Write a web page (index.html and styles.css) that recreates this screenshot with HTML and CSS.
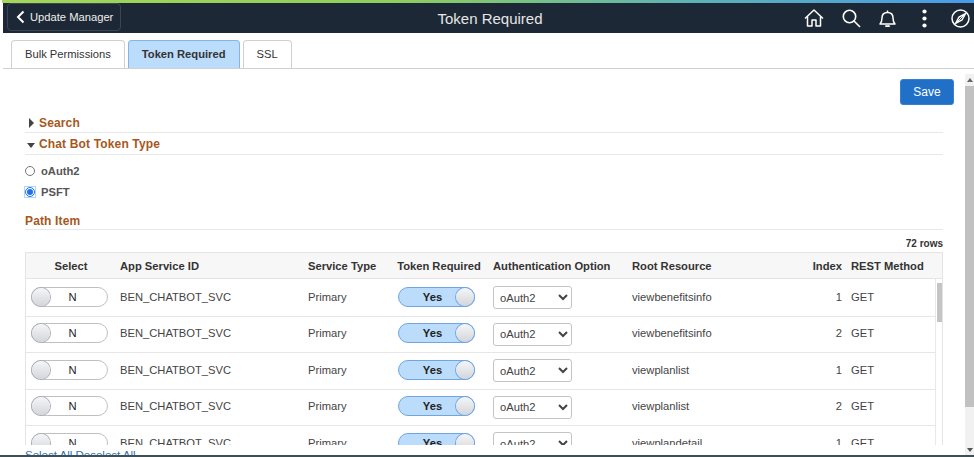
FILE: index.html
```html
<!DOCTYPE html>
<html lang="en">
<head>
    <meta charset="UTF-8">
    <meta name="viewport" content="width=device-width, initial-scale=1.0">
    <title>Token Required</title>
    <link rel="stylesheet" href="styles.css">
</head>
<body>
    <div class="gradient"></div>
    <header class="banner">
        <div class="banner-left">
            <button class="back">
                <svg width="9" height="14" viewBox="0 0 9 14"><path d="M7.5 1.5 2 7l5.500 5.500" fill="none" stroke="#fff" stroke-width="2"/></svg>
                Update Manager
            </button>
        </div>
        <div class="banner-title">Token Required</div>
        <div class="banner-icons">
            <svg width="20" height="18" viewBox="0 0 20 18" fill="none" stroke="#fff" stroke-width="1.500" stroke-linejoin="round">
                <path d="M1 9.500 10 1l9 8.500"/>
                <path d="M3.500 7.500V17h4.500v-6h4v6h4.500V7.500"/>
            </svg>
            <svg width="19" height="19" viewBox="0 0 19 19" fill="none" stroke="#fff" stroke-width="1.600">
                <circle cx="7.500" cy="7.500" r="6.200"/>
                <path d="m12 12 6 6"/>
            </svg>
            <svg width="17" height="18" viewBox="0 0 17 18" fill="none" stroke="#fff" stroke-width="1.500" stroke-linejoin="round">
                <path d="M1 15c1.500-1.500 2-3 2-6 0-3.500 2-5.500 5.500-5.500S14 5.500 14 9c0 3 .5 4.500 2 6z"/>
                <path d="M8.500 3.500V1.500"/>
                <path d="M6.500 16.500c.5 1 3.500 1 4 0" stroke-width="1.800"/>
            </svg>
            <svg class="dots" width="5" height="19" viewBox="0 0 5 19" fill="#fff">
                <circle cx="2.500" cy="2.500" r="2.100"/>
                <circle cx="2.500" cy="9.500" r="2.100"/>
                <circle cx="2.500" cy="16.500" r="2.100"/>
            </svg>
            <svg width="19" height="19" viewBox="0 0 19 19" fill="none" stroke="#fff" stroke-width="1.500">
                <circle cx="9.500" cy="9.500" r="8.500"/>
                <path d="m4.500 14.500 3.500-6.500 6.500-3.500-3.500 6.500z"/>
                <path d="m4.500 14.500 10-10" stroke-width="1"/>
            </svg>
        </div>
    </header>

    <nav class="tabs">
        <div class="tab">Bulk Permissions</div>
        <div class="tab active">Token Required</div>
        <div class="tab">SSL</div>
    </nav>

    <div class="main">
        <div class="content">
            <div class="actions"><button class="save">Save</button></div>

            <h2 class="section first"><span class="arrow-right"></span>Search</h2>
            <h2 class="section second"><span class="arrow-down"></span>Chat Bot Token Type</h2>

            <label class="radio-row"><input type="radio" name="tokentype"> oAuth2</label>
            <label class="radio-row"><input type="radio" name="tokentype" checked> PSFT</label>

            <h2 class="section path-item">Path Item</h2>
            <div class="row-count">72 rows</div>

            <div class="grid">
                <div class="grid-head">
                    <div class="center">Select</div>
                    <div>App Service ID</div>
                    <div>Service Type</div>
                    <div class="center">Token Required</div>
                    <div>Authentication Option</div>
                    <div>Root Resource</div>
                    <div class="right">Index</div>
                    <div>REST Method</div>
                </div>
                <div class="grid-scroll">
                    <div class="grid-rows">
                        <div class="grid-row">
                            <div class="cell"><div class="toggle-off"><span class="knob"></span><span class="toggle-text">N</span></div></div>
                            <div class="cell">BEN_CHATBOT_SVC</div>
                            <div class="cell">Primary</div>
                            <div class="cell"><div class="toggle-on"><span class="toggle-text">Yes</span><span class="knob"></span></div></div>
                            <div class="cell"><select><option>oAuth2</option></select></div>
                            <div class="cell">viewbenefitsinfo</div>
                            <div class="cell right">1</div>
                            <div class="cell">GET</div>
                        </div>
                        <div class="grid-row">
                            <div class="cell"><div class="toggle-off"><span class="knob"></span><span class="toggle-text">N</span></div></div>
                            <div class="cell">BEN_CHATBOT_SVC</div>
                            <div class="cell">Primary</div>
                            <div class="cell"><div class="toggle-on"><span class="toggle-text">Yes</span><span class="knob"></span></div></div>
                            <div class="cell"><select><option>oAuth2</option></select></div>
                            <div class="cell">viewbenefitsinfo</div>
                            <div class="cell right">2</div>
                            <div class="cell">GET</div>
                        </div>
                        <div class="grid-row">
                            <div class="cell"><div class="toggle-off"><span class="knob"></span><span class="toggle-text">N</span></div></div>
                            <div class="cell">BEN_CHATBOT_SVC</div>
                            <div class="cell">Primary</div>
                            <div class="cell"><div class="toggle-on"><span class="toggle-text">Yes</span><span class="knob"></span></div></div>
                            <div class="cell"><select><option>oAuth2</option></select></div>
                            <div class="cell">viewplanlist</div>
                            <div class="cell right">1</div>
                            <div class="cell">GET</div>
                        </div>
                        <div class="grid-row">
                            <div class="cell"><div class="toggle-off"><span class="knob"></span><span class="toggle-text">N</span></div></div>
                            <div class="cell">BEN_CHATBOT_SVC</div>
                            <div class="cell">Primary</div>
                            <div class="cell"><div class="toggle-on"><span class="toggle-text">Yes</span><span class="knob"></span></div></div>
                            <div class="cell"><select><option>oAuth2</option></select></div>
                            <div class="cell">viewplanlist</div>
                            <div class="cell right">2</div>
                            <div class="cell">GET</div>
                        </div>
                        <div class="grid-row">
                            <div class="cell"><div class="toggle-off"><span class="knob"></span><span class="toggle-text">N</span></div></div>
                            <div class="cell">BEN_CHATBOT_SVC</div>
                            <div class="cell">Primary</div>
                            <div class="cell"><div class="toggle-on"><span class="toggle-text">Yes</span><span class="knob"></span></div></div>
                            <div class="cell"><select><option>oAuth2</option></select></div>
                            <div class="cell">viewplandetail</div>
                            <div class="cell right">1</div>
                            <div class="cell">GET</div>
                        </div>
                    </div>
                    <div class="inner-scroll"><div class="inner-thumb"></div></div>
                </div>
            </div>
            <div class="grid-links"><a href="#">Select All</a> <a href="#">Deselect All</a></div>
        </div>
        <div class="page-scroll">
            <span class="scroll-up"></span>
            <div class="page-thumb"></div>
            <span class="scroll-down"></span>
        </div>
    </div>
    <div class="bottom-line"></div>
</body>
</html>
```

FILE: styles.css
```css
html, body {
    height: 100%;
}
body {
    font-family: "Liberation Sans", Arial, sans-serif;
    font-size: 11.2px;
    color: #333333;
    background-color: #ffffff;
    margin: 0;
    padding: 0;
    display: flex;
    flex-direction: column;
    overflow: hidden;
}
.gradient {
    height: 3px;
    flex: none;
    margin-left: 2px;
    background: linear-gradient(to right, #a4d65a 0%, #8fce5c 40%, #5fb3b3 70%, #4a9be8 100%);
}
.banner {
    height: 30px;
    flex: none;
    margin-left: 3px;
    background-color: #1c2835;
    display: grid;
    grid-template-columns: 1fr auto 1fr;
    align-items: center;
}
.banner-left {
    padding-left: 4px;
    align-self: start;
}
.back {
    display: flex;
    align-items: center;
    gap: 5px;
    width: 114px;
    height: 28px;
    padding: 0 0 0 8px;
    background: transparent;
    color: #eeeeee;
    border: 1px solid #3b4654;
    border-radius: 4px;
    font-family: inherit;
    font-size: 11.2px;
    white-space: nowrap;
}
.banner-title {
    color: #e6e6e6;
    font-size: 15px;
    margin-left: 3px;
}
.banner-icons {
    display: flex;
    justify-content: flex-end;
    align-items: center;
    gap: 18px;
    padding-right: 4px;
}
.banner-icons .dots {
    margin: 0 6px 0 8px;
}
.tabs {
    flex: none;
    display: flex;
    gap: 3px;
    height: 28px;
    margin: 7px 0 0 3px;
    padding-left: 8px;
    border-bottom: 1px solid #d0d3d6;
}
.tab {
    display: flex;
    align-items: center;
    padding: 0 13px 1px;
    background: #ffffff;
    border: 1px solid #d0d0d0;
    border-bottom: none;
    border-radius: 4px 4px 0 0;
    color: #333333;
}
.tab.active {
    background-color: #bcdcfb;
    border-color: #86b5e3;
    font-weight: bold;
}
.main {
    flex: 1;
    min-height: 0;
    display: flex;
    overflow: hidden;
}
.content {
    flex: 1;
    min-width: 0;
    padding: 10px 22px 0 25px;
}
.actions {
    display: flex;
    justify-content: flex-end;
    margin-right: -11px;
}
.save {
    width: 54px;
    height: 26px;
    background-color: #2170c8;
    color: #ffffff;
    border: 1px solid #3a80d0;
    border-radius: 3px;
    font-family: inherit;
    font-size: 12px;
}
.section {
    margin: 0;
    height: 21px;
    display: flex;
    align-items: center;
    font-size: 12px;
    font-weight: bold;
    letter-spacing: 0.15px;
    color: #a8571c;
    border-bottom: 1px solid #e6e8ea;
    padding-top: 1px;
    box-sizing: border-box;
}
.section.first {
    margin-top: 7px;
}
.section.second {
    height: 22px;
}
.arrow-right {
    width: 0;
    height: 0;
    margin: 0 5px 0 4px;
    border-left: 5px solid #444444;
    border-top: 5px solid transparent;
    border-bottom: 5px solid transparent;
}
.arrow-down {
    width: 0;
    height: 0;
    margin: 2px 4px 0 2px;
    border-top: 5px solid #444444;
    border-left: 4.500px solid transparent;
    border-right: 4.500px solid transparent;
}
.radio-row {
    display: flex;
    align-items: center;
    gap: 6px;
    height: 21px;
    font-weight: bold;
    color: #555555;
}
.radio-row:first-of-type {
    margin-top: 5px;
}
.radio-row input {
    margin: 0;
    width: 10px;
    height: 10px;
    border-radius: 50%;
    accent-color: #1a73e8;
}
.radio-row input:checked {
    box-shadow: 0 0 0 1px #b5d5f8;
}
.section.path-item {
    margin-top: 8px;
    height: 20px;
    padding-top: 2px;
}
.row-count {
    margin-top: 8px;
    height: 14px;
    text-align: right;
    font-size: 10px;
    font-weight: bold;
}
.grid {
    height: 193px;
    border: 1px solid #e4e4e4;
    border-bottom: none;
    overflow: hidden;
    width: 918px;
    box-sizing: border-box;
}
.grid-head, .grid-row {
    display: grid;
    grid-template-columns: 86px 188px 89px 96px 139px 166px 56px auto;
    align-items: center;
}
.grid-head {
    height: 25px;
    background-color: #f7f7f7;
    border-bottom: 1px solid #e4e4e4;
    font-weight: bold;
}
.grid-head > div, .cell {
    padding-left: 8px;
}
.grid-head .center {
    padding: 0 0 0 4px;
    text-align: center;
}
.grid-head .right, .cell.right {
    padding: 0 4px 0 0;
    text-align: right;
}
.grid-head > div:last-child, .grid-row .cell:last-child {
    padding-left: 5px;
}
.grid-scroll {
    display: flex;
    height: 166px;
}
.grid-rows {
    flex: 1;
    min-width: 0;
    padding-top: 1px;
}
.grid-row {
    height: 33.500px;
    padding-bottom: 2px;
    border-bottom: 1px solid #e6e6e6;
}
.cell {
    color: #444444;
}
.inner-scroll {
    flex: none;
    width: 7px;
    box-sizing: border-box;
    border-left: 1px solid #e8e8e8;
    padding: 4px 0 0 1px;
}
.inner-thumb {
    width: 5px;
    height: 39px;
    background-color: #c4c4c4;
}
.toggle-off, .toggle-on {
    display: flex;
    align-items: center;
    width: 77px;
    height: 20px;
    margin-left: -3px;
    border-radius: 10px;
    box-sizing: border-box;
}
.toggle-off {
    background-color: #ffffff;
    border: 1px solid #c0c0c0;
}
.toggle-off .toggle-text {
    padding-right: 12px;
}
.toggle-on {
    margin-left: 1px;
    background-color: #bcdcfb;
    border: 1px solid #6fa5e2;
    justify-content: flex-end;
    font-weight: bold;
}
.toggle-on .toggle-text {
    padding-left: 10px;
}
.knob {
    flex: none;
    width: 18px;
    height: 18px;
    border-radius: 50%;
    background: linear-gradient(to bottom, #f6f6f8, #d2d5da);
    box-shadow: 0 0 0 1px #aab0b8;
}
.toggle-on .knob {
    box-shadow: 0 0 0 1px #6fa5e2;
}
.toggle-text {
    flex: 1;
    text-align: center;
    color: #222222;
}
select {
    display: block;
    width: 79px;
    height: 23px;
    margin-top: 2px;
    padding: 0 0 0 2px;
    background-color: #ffffff;
    border: 1px solid #c4c4c4;
    border-radius: 3px;
    font-family: inherit;
    font-size: 11.2px;
    color: #444444;
}
.grid-links {
    margin-top: 3px;
    font-size: 11.500px;
    line-height: 14px;
}
.grid-links a {
    color: #2c72b8;
    text-decoration: none;
}
.page-scroll {
    flex: none;
    width: 9px;
    margin-top: 5px;
    background-color: #f1f1f1;
    display: flex;
    flex-direction: column;
    align-items: center;
}
.scroll-up {
    margin-top: 4px;
    border-bottom: 4px solid #666666;
    border-left: 3px solid transparent;
    border-right: 3px solid transparent;
}
.page-thumb {
    width: 9px;
    height: 321px;
    margin-top: 4px;
    background-color: #c1c1c1;
}
.scroll-down {
    margin-top: auto;
    margin-bottom: 3px;
    border-top: 4px solid #555555;
    border-left: 3px solid transparent;
    border-right: 3px solid transparent;
}
.bottom-line {
    flex: none;
    height: 2px;
    background-color: #3e4f55;
}
```
